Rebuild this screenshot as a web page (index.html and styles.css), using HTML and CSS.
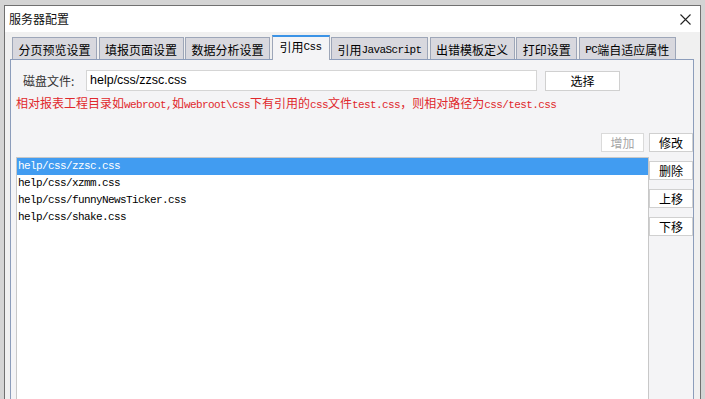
FILE: index.html
```html
<!DOCTYPE html>
<html>
<head>
  <title>服务器配置</title>
  <link rel="stylesheet" href="styles.css">
</head>
<body>
  <div class="dialog">
    <div class="titlebar">
      <span class="title">服务器配置</span>
      <svg class="close" width="11" height="11" viewBox="0 0 11 11">
        <path d="M0.5 0.5 L10.5 10.5 M10.5 0.5 L0.5 10.5" stroke="#222" stroke-width="1.1" fill="none"/>
      </svg>
    </div>
    <div class="dialog-body">
      <div class="tabs">
        <div class="tab">分页预览设置</div>
        <div class="tab">填报页面设置</div>
        <div class="tab">数据分析设置</div>
        <div class="tab active">引用<span class="latin">Css</span></div>
        <div class="tab">引用<span class="latin">JavaScript</span></div>
        <div class="tab">出错模板定义</div>
        <div class="tab">打印设置</div>
        <div class="tab"><span class="latin">PC</span>端自适应属性</div>
      </div>
      <div class="panel">
        <div class="file-row">
          <span class="file-label">磁盘文件:</span>
          <div class="file-input">help/css/zzsc.css</div>
          <button class="btn btn-choose">选择</button>
        </div>
        <div class="hint">相对报表工程目录如<span class="latin">webroot,</span>如<span class="latin">webroot\css</span>下有引用的<span class="latin">css</span>文件<span class="latin">test.css</span>，则相对路径为<span class="latin">css/test.css</span></div>
        <div class="main">
          <div class="list-col">
            <div class="toolbar">
              <button class="btn btn-disabled">增加</button>
            </div>
            <div class="list">
              <div class="row selected">help/css/zzsc.css</div>
              <div class="row">help/css/xzmm.css</div>
              <div class="row">help/css/funnyNewsTicker.css</div>
              <div class="row">help/css/shake.css</div>
            </div>
          </div>
          <div class="side-buttons">
            <button class="btn">修改</button>
            <button class="btn">删除</button>
            <button class="btn">上移</button>
            <button class="btn">下移</button>
          </div>
        </div>
      </div>
    </div>
  </div>
</body>
</html>
```
FILE: styles.css
```css
body {
  margin: 0;
  height: 399px;
  overflow: hidden;
  background: #d4d4d4;
  color: #000;
  font-family: "Noto Sans CJK SC", sans-serif;
  font-size: 12px;
}

.latin {
  font-family: "Liberation Mono", monospace;
  font-size: 11px;
  letter-spacing: -0.6px;
}

.dialog {
  margin: 5px 0 0 4px;
  width: 697px;
  height: 394px;
  box-sizing: border-box;
  border: 1px solid #707070;
  border-bottom: none;
  background: #f0f0f0;
  display: flex;
  flex-direction: column;
}

.titlebar {
  height: 26px;
  flex: none;
  background: #fff;
  display: flex;
  align-items: center;
  justify-content: space-between;
  padding: 0 9px 0 4px;
}
.title {
  line-height: 14px;
  color: #111;
}

.dialog-body {
  flex: 1;
  min-height: 0;
  display: flex;
  flex-direction: column;
  padding: 3px 6px 0 5px;
}

/* tab strip */
.tabs {
  flex: none;
  display: flex;
  align-items: flex-end;
  gap: 1.5px;
  padding-left: 2px;
  border-bottom: 1px solid #8c9dbb;
}
.tab {
  height: 22px;
  box-sizing: border-box;
  padding: 2px 5.5px 0;
  border: 1px solid #9da6b8;
  border-bottom: none;
  background: #d8d8de;
  display: flex;
  align-items: center;
  white-space: nowrap;
  line-height: 14px;
}
.tab.active {
  height: 25px;
  margin-bottom: -1px;
  padding: 0 7px 3px;
  border-top: 2px solid #3b93e6;
  background: #f4f4f6;
}

.panel {
  flex: 1;
  display: flex;
  flex-direction: column;
  padding: 10px 0 0 5px;
  border: 1px solid #8c9dbb;
  border-top: none;
  border-bottom: none;
  background: #f4f4f6;
}

.file-row {
  height: 21px;
  display: flex;
  align-items: center;
  padding-left: 7px;
}
.file-label {
  width: 63px;
  color: #333;
}
.file-input {
  width: 451px;
  height: 21px;
  box-sizing: border-box;
  padding-left: 3px;
  border: 1px solid #d5d5d5;
  background: #fff;
  font-family: "Liberation Sans", sans-serif;
  font-size: 12.5px;
  line-height: 19px;
  color: #000;
}

.btn {
  height: 19px;
  box-sizing: border-box;
  padding: 0;
  border: 1px solid #d0d0d0;
  background: #fff;
  color: #000;
  font-family: "Noto Sans CJK SC", sans-serif;
  font-size: 12px;
  line-height: 17px;
}
.btn-choose {
  width: 75px;
  height: 20px;
  margin-left: 8px;
}
.btn-disabled {
  width: 43px;
  margin-right: 5px;
  color: #a6a6a6;
  border-color: #dadada;
}

.hint {
  margin-top: 4px;
  line-height: 16px;
  color: #e0282c;
  white-space: nowrap;
}

.main {
  flex: 1;
  display: flex;
  margin-top: 20px;
}
.list-col {
  width: 633px;
  display: flex;
  flex-direction: column;
}
.toolbar {
  height: 19px;
  display: flex;
  justify-content: flex-end;
}
.list {
  flex: 1;
  margin-top: 5px;
  border: 1px solid #c8c8c8;
  border-bottom: none;
  background: #fff;
}
.row {
  height: 17px;
  padding-left: 1px;
  line-height: 17px;
  font-family: "Liberation Mono", monospace;
  font-size: 11px;
  letter-spacing: -0.6px;
  color: #000;
}
.row.selected {
  background: #419cf1;
  color: #fff;
}

.side-buttons {
  width: 44px;
  display: flex;
  flex-direction: column;
  gap: 9px;
}
```
